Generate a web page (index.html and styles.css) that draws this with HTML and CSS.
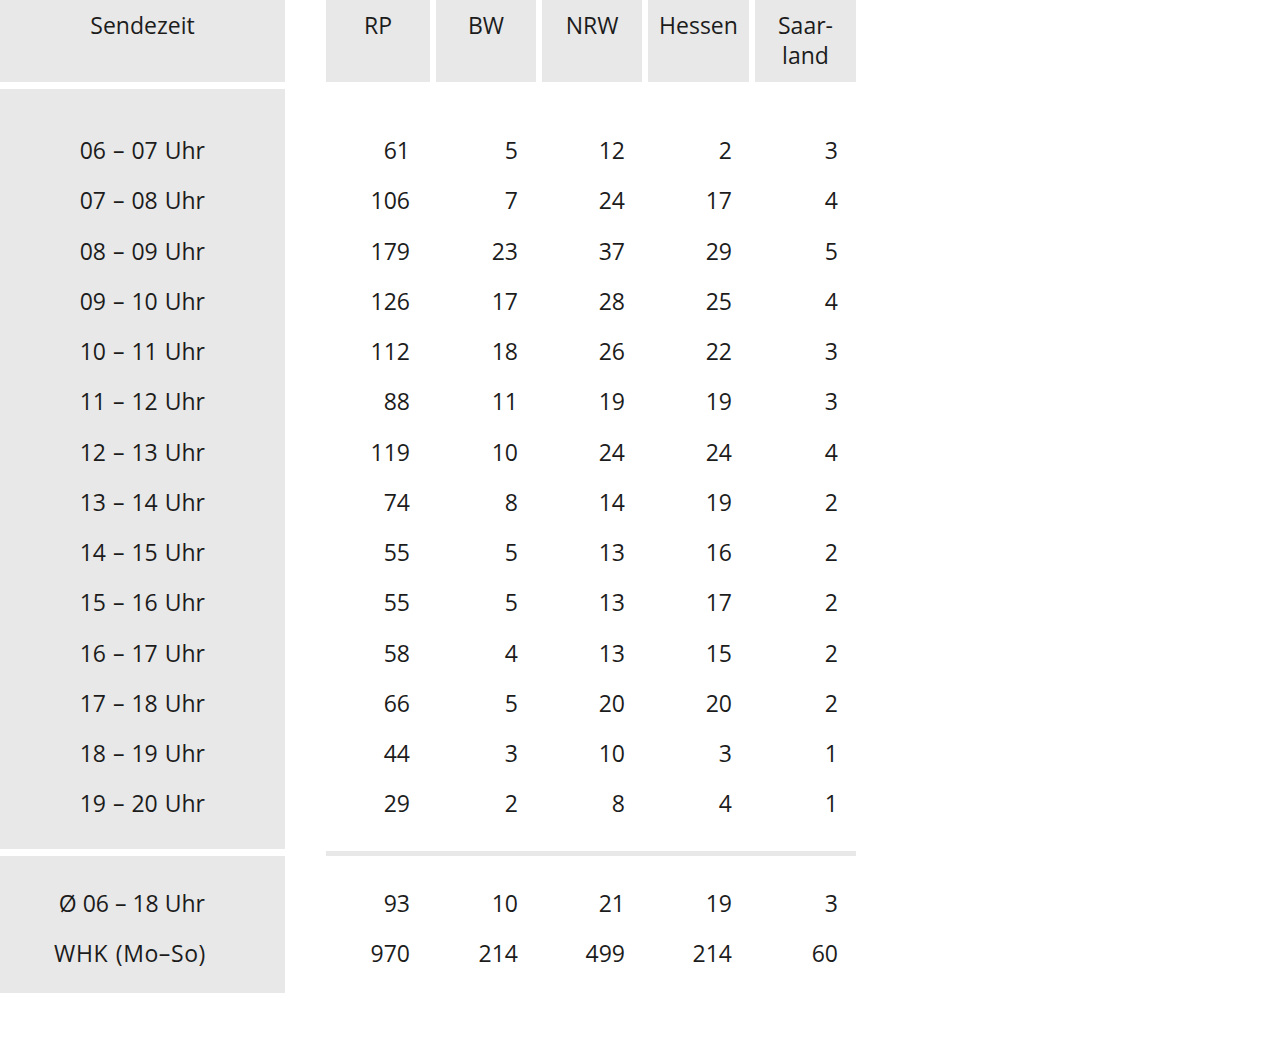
FILE: index.html
```html
<!DOCTYPE html>
<html lang="de">
<head>
<meta charset="utf-8">
<title>Sendezeit</title>
<link rel="stylesheet" href="styles.css">
</head>
<body>
<div class="table">
  <div class="band head">
    <div class="label-cell">Sendezeit</div>
    <div class="cols">
      <div class="col c1">RP</div>
      <div class="col c2">BW</div>
      <div class="col c3">NRW</div>
      <div class="col c4">Hessen</div>
      <div class="col c5">Saar-<br>land</div>
    </div>
  </div>

  <div class="band body-band">
    <div class="label-cell">
      <div class="row">06 – 07 Uhr</div>
      <div class="row">07 – 08 Uhr</div>
      <div class="row">08 – 09 Uhr</div>
      <div class="row">09 – 10 Uhr</div>
      <div class="row">10 – 11 Uhr</div>
      <div class="row">11 – 12 Uhr</div>
      <div class="row">12 – 13 Uhr</div>
      <div class="row">13 – 14 Uhr</div>
      <div class="row">14 – 15 Uhr</div>
      <div class="row">15 – 16 Uhr</div>
      <div class="row">16 – 17 Uhr</div>
      <div class="row">17 – 18 Uhr</div>
      <div class="row">18 – 19 Uhr</div>
      <div class="row">19 – 20 Uhr</div>
    </div>
    <div class="cols">
      <div class="col c1">
        <div class="row">61</div><div class="row">106</div><div class="row">179</div><div class="row">126</div><div class="row">112</div><div class="row">88</div><div class="row">119</div><div class="row">74</div><div class="row">55</div><div class="row">55</div><div class="row">58</div><div class="row">66</div><div class="row">44</div><div class="row">29</div>
      </div>
      <div class="col c2">
        <div class="row">5</div><div class="row">7</div><div class="row">23</div><div class="row">17</div><div class="row">18</div><div class="row">11</div><div class="row">10</div><div class="row">8</div><div class="row">5</div><div class="row">5</div><div class="row">4</div><div class="row">5</div><div class="row">3</div><div class="row">2</div>
      </div>
      <div class="col c3">
        <div class="row">12</div><div class="row">24</div><div class="row">37</div><div class="row">28</div><div class="row">26</div><div class="row">19</div><div class="row">24</div><div class="row">14</div><div class="row">13</div><div class="row">13</div><div class="row">13</div><div class="row">20</div><div class="row">10</div><div class="row">8</div>
      </div>
      <div class="col c4">
        <div class="row">2</div><div class="row">17</div><div class="row">29</div><div class="row">25</div><div class="row">22</div><div class="row">19</div><div class="row">24</div><div class="row">19</div><div class="row">16</div><div class="row">17</div><div class="row">15</div><div class="row">20</div><div class="row">3</div><div class="row">4</div>
      </div>
      <div class="col c5">
        <div class="row">3</div><div class="row">4</div><div class="row">5</div><div class="row">4</div><div class="row">3</div><div class="row">3</div><div class="row">4</div><div class="row">2</div><div class="row">2</div><div class="row">2</div><div class="row">2</div><div class="row">2</div><div class="row">1</div><div class="row">1</div>
      </div>
    </div>
  </div>

  <div class="band sep">
    <div class="label-space"></div>
    <div class="sep-line"></div>
  </div>

  <div class="band foot">
    <div class="label-cell">
      <div class="row avg">Ø 06 – 18 Uhr</div>
      <div class="row whk">WHK (Mo–So)</div>
    </div>
    <div class="cols">
      <div class="col c1"><div class="row">93</div><div class="row">970</div></div>
      <div class="col c2"><div class="row">10</div><div class="row">214</div></div>
      <div class="col c3"><div class="row">21</div><div class="row">499</div></div>
      <div class="col c4"><div class="row">19</div><div class="row">214</div></div>
      <div class="col c5"><div class="row">3</div><div class="row">60</div></div>
    </div>
  </div>
</div>
</body>
</html>
```

FILE: styles.css
```css
html, body {
  margin: 0;
  padding: 0;
  background: #ffffff;
}

body {
  font-family: "Open Sans", "Noto Sans", "Liberation Sans", sans-serif;
  font-size: 23px;
  color: #1c1c1c;
}

.table {
  display: flex;
  flex-direction: column;
  width: 856px;
}

.band {
  display: flex;
}

.label-cell {
  width: 285px;
  flex: none;
  background: #e8e8e8;
  box-sizing: border-box;
}

.cols {
  display: flex;
  gap: 6px;
  margin-left: 41px;
}

.col {
  box-sizing: border-box;
  flex: none;
}

.c1 { width: 104px; }
.c2 { width: 100px; }
.c3 { width: 100px; }
.c4 { width: 101px; }
.c5 { width: 101px; }

/* Header */
.head {
  height: 82px;
}

.head .label-cell,
.head .col {
  background: #e8e8e8;
  text-align: center;
  padding-top: 10px;
  line-height: 30px;
  height: 82px;
}

/* Body */
.body-band {
  margin-top: 7px;
  height: 760px;
}

.body-band .label-cell,
.body-band .col {
  padding-top: 36px;
}

.row {
  height: 50.25px;
  line-height: 50.25px;
  white-space: nowrap;
}

.label-cell .row {
  text-align: right;
  padding-right: 80px;
  word-spacing: 1px;
}

.label-cell .avg {
  word-spacing: 0;
}

.label-cell .whk {
  letter-spacing: 0.6px;
  padding-right: 79px;
}

.col .row {
  text-align: right;
  padding-right: 18px;
}

.c1 .row { padding-right: 20px; }
.c3 .row, .c4 .row { padding-right: 17px; }

/* Separator */
.sep {
  height: 7px;
}

.label-space {
  width: 285px;
  flex: none;
}

.sep-line {
  margin-left: 41px;
  margin-top: 2px;
  width: 530px;
  height: 5px;
  background: #e8e8e8;
}

/* Footer */
.foot {
  height: 137px;
}

.foot .label-cell,
.foot .col {
  padding-top: 22px;
}

.foot .row {
  height: 50px;
  line-height: 50px;
}
```
